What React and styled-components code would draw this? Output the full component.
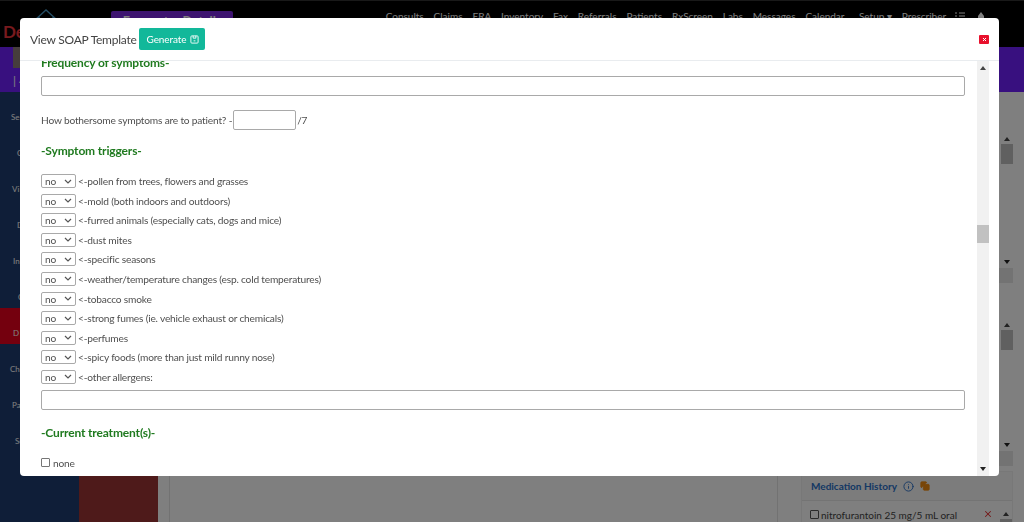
import React from 'react';
import styled, { createGlobalStyle } from 'styled-components';
import { X, Info, Copy } from 'lucide-react';

const GlobalStyle = createGlobalStyle`
  html, body { margin: 0; padding: 0; height: 100%; overflow: hidden; }
  body { font-family: Lato, "Open Sans", sans-serif; color: #4a4a4a; background: #fff; }
  * { box-sizing: border-box; }
`;

const Page = styled.div`
  width: 1024px;
  height: 522px;
  overflow: hidden;
  display: flex;
  flex-direction: column;
`;

const TopBar = styled.div`
  height: 47px;
  flex: none;
  background: #000;
  border-top: 1px solid #333;
  display: flex;
  align-items: flex-start;
  padding-right: 40px;
`;

const BrandBlock = styled.div`
  width: 111px;
  flex: none;
  display: flex;
  flex-direction: column;
  padding: 8px 0 0 3px;
`;

const LogoMark = styled.svg`
  display: block;
  margin-left: 31px;
`;

const Brand = styled.div`
  color: #f0343c;
  font-size: 17px;
  font-weight: 700;
  line-height: 18px;
`;

const EncounterButton = styled.div`
  width: 122px;
  height: 30px;
  margin-top: 10px;
  background: #7a28e0;
  border-radius: 2px;
  color: #fff;
  font-size: 12.5px;
  font-weight: 700;
  line-height: 22px;
  text-align: center;
`;

const TopNav = styled.nav`
  margin-left: auto;
  display: flex;
  align-items: center;
  gap: 9.9px;
  padding-top: 8px;
  color: #fff;
  font-size: 10px;
  line-height: 14px;
`;

const SetupLink = styled.span`
  margin-left: 4.6px;
`;

const NavIcons = styled.div`
  display: flex;
  align-items: center;
  gap: 13px;
  margin-left: -1px;
`;

const PurpleBand = styled.div`
  height: 45px;
  flex: none;
  background: #7020ff;
  padding-left: 13px;
`;

const Avatar = styled.div`
  width: 24px;
  height: 21px;
  background: #8c7a78;
`;

const UserLine = styled.div`
  margin-top: 6px;
  color: #fff;
  font-size: 12px;
  line-height: 13px;
`;

const Body = styled.div`
  flex: 1;
  display: flex;
  min-height: 0;
`;

const SideBar = styled.div`
  width: 79px;
  flex: none;
  background: #1e3c70;
  display: flex;
  flex-direction: column;
`;

const SideItem = styled.div`
  height: 36px;
  padding: 19px 0 0 ${({ $indent }) => $indent}px;
  line-height: 12px;
  font-size: 8px;
  color: #fff;
  background: ${({ $active }) => ($active ? '#e8001c' : 'transparent')};
`;

const RedPanel = styled.div`
  width: 79px;
  flex: none;
  background: #9c3434;
`;

const MainArea = styled.div`
  flex: 1;
  min-width: 0;
  background: #fff;
  display: flex;
  padding: 0 11px 0 11px;
`;

const Worksheet = styled.div`
  width: 609px;
  flex: none;
  border-left: 1px solid #e4e4e4;
  border-right: 1px solid #e4e4e4;
`;

const RightColumn = styled.div`
  margin-left: 23px;
  flex: 1;
  display: flex;
  flex-direction: column;
  padding-top: 8px;
`;

const SidePanel = styled.div`
  flex: none;
  height: ${({ $height }) => $height}px;
  display: flex;
  flex-direction: column;
`;

const PanelBody = styled.div`
  flex: 1;
  min-height: 0;
  display: flex;
  justify-content: flex-end;
  padding-top: ${({ $top }) => $top}px;
`;

const PanelFooter = styled.div`
  height: 15px;
  margin-bottom: 1px;
  flex: none;
  background: #e6e6e6;
`;

const MiniScroll = styled.div`
  width: 12px;
  display: flex;
  flex-direction: column;
  align-items: center;
  padding: 3px 0 4px;
  background: #fff;
`;

const MiniThumb = styled.div`
  width: 12px;
  height: 20px;
  margin-top: 3px;
  background: #c1c1c1;
`;

const MiniSpacer = styled.div`
  flex: 1;
`;

const MedicationPanel = styled.div`
  flex: 1;
  margin-top: 4px;
  border: 1px solid #f0f0f0;
  display: flex;
  flex-direction: column;
`;

const MedicationHeader = styled.div`
  height: 29px;
  flex: none;
  padding-left: 9px;
  display: flex;
  align-items: center;
  gap: 6px;
  color: #2a70c8;
  font-size: 10px;
  font-weight: 700;
  border-bottom: 1px solid #e8e8e8;
  background: #f8f8f8;
`;

const MedicationRow = styled.div`
  flex: 1;
  display: flex;
  align-items: flex-start;
  gap: 2px;
  padding: 8px 0 0 8px;
  font-size: 10px;
  color: #444;
`;

const MedicationX = styled.span`
  margin-left: auto;
  margin-right: 5px;
  color: #e83030;
  display: flex;
`;

const MedicationCheck = styled.span`
  width: 9px;
  height: 9px;
  margin-top: 1px;
  border: 1px solid #555;
  border-radius: 1px;
`;

const Backdrop = styled.div`
  position: fixed;
  inset: 0;
  background: rgba(0, 0, 0, 0.5);
`;

const Modal = styled.div`
  position: fixed;
  left: 20px;
  top: 18px;
  width: 979px;
  height: 458px;
  background: #fff;
  border-radius: 4px;
  display: flex;
  flex-direction: column;
  overflow: hidden;
`;

const ModalHeader = styled.div`
  height: 43px;
  flex: none;
  border-bottom: 1px solid #e9ecef;
  display: flex;
  align-items: center;
  padding: 0 10px;
`;

const ModalTitle = styled.h5`
  margin: 0 2px 0 0;
  font-size: 12px;
  letter-spacing: -0.25px;
  font-weight: 400;
  color: #444;
`;

const GenerateButton = styled.button`
  height: 22px;
  width: 66px;
  padding: 0 0 0 8px;
  border: none;
  border-radius: 2px;
  background: #12b89a;
  color: #fff;
  font-family: inherit;
  font-size: 10px;
  letter-spacing: -0.1px;
  display: flex;
  align-items: center;
  gap: 4px;
`;

const CloseButton = styled.button`
  margin-left: auto;
  width: 10px;
  height: 9px;
  padding: 0;
  border: none;
  border-radius: 1px;
  background: #e8112d;
  color: #fff;
  display: flex;
  align-items: center;
  justify-content: center;
`;

const ScrollRow = styled.div`
  flex: 1;
  display: flex;
  min-height: 0;
  padding-right: 10px;
`;

const Content = styled.div`
  flex: 1;
  overflow: hidden;
  padding: 0 12px 0 21px;
  font-size: 10.2px;
  letter-spacing: -0.2px;
  color: #505050;
`;

const Heading = styled.div`
  color: #1f7a1f;
  font-size: 12px;
  letter-spacing: -0.15px;
  font-weight: 700;
  line-height: 14px;
  margin-top: ${({ $top }) => $top}px;
`;

const WideInput = styled.div`
  height: 20px;
  border: 1px solid #a9a9a9;
  border-radius: 2px;
  margin-top: ${({ $top }) => $top}px;
`;

const ScoreRow = styled.div`
  display: flex;
  align-items: center;
  gap: 1px;
  height: 20px;
  margin-top: 14px;
`;

const ScoreInput = styled.div`
  width: 63px;
  height: 20px;
  border: 1px solid #a9a9a9;
  border-radius: 2px;
`;

const TriggerList = styled.div`
  margin-top: 16px;
  display: flex;
  flex-direction: column;
  gap: 5.6px;
`;

const TriggerRow = styled.div`
  display: flex;
  align-items: center;
  gap: 2px;
  height: 14px;
`;

const SelectBox = styled.div`
  width: 35px;
  height: 14px;
  border: 1px solid #a9a9a9;
  border-radius: 2px;
  padding: 0 3px;
  display: flex;
  align-items: center;
  justify-content: space-between;
`;

const CheckRow = styled.div`
  display: flex;
  align-items: center;
  gap: 3px;
  margin-top: 17px;
`;

const CheckBox = styled.span`
  width: 9px;
  height: 9px;
  border: 1px solid #767676;
  border-radius: 1px;
`;

const ScrollTrack = styled.div`
  width: 12px;
  flex: none;
  background: #f1f1f1;
  display: flex;
  flex-direction: column;
  align-items: center;
  justify-content: space-between;
  padding: 5px 0;
  position: relative;
`;

const ScrollThumb = styled.div`
  position: absolute;
  top: 164px;
  left: 0;
  width: 12px;
  height: 18px;
  background: #c1c1c1;
`;

const triggers = [
  'pollen from trees, flowers and grasses',
  'mold (both indoors and outdoors)',
  'furred animals (especially cats, dogs and mice)',
  'dust mites',
  'specific seasons',
  'weather/temperature changes (esp. cold temperatures)',
  'tobacco smoke',
  'strong fumes (ie. vehicle exhaust or chemicals)',
  'perfumes',
  'spicy foods (more than just mild runny nose)',
  'other allergens:',
];

const navItems = ['Consults', 'Claims', 'ERA', 'Inventory', 'Fax', 'Referrals', 'Patients', 'RxScreen', 'Labs', 'Messages', 'Calendar'];

const sideItems = [
  { label: 'Se', indent: 11 },
  { label: 'C', indent: 17 },
  { label: 'Vi', indent: 12 },
  { label: 'D', indent: 17 },
  { label: 'In', indent: 13 },
  { label: 'C', indent: 18 },
  { label: 'D', indent: 13, active: true },
  { label: 'Ch', indent: 10 },
  { label: 'Pa', indent: 12 },
  { label: 'Se', indent: 15 },
];

const ArrowUp = () => (
  <svg width="6" height="4" viewBox="0 0 6 4" fill="#444"><path d="M0 4l3-4 3 4z" /></svg>
);

const ArrowDown = () => (
  <svg width="6" height="4" viewBox="0 0 6 4" fill="#222"><path d="M0 0l3 4 3-4z" /></svg>
);

const Chevron = () => (
  <svg width="8" height="5" viewBox="0 0 8 5" fill="none" stroke="#555" strokeWidth="1.2"><path d="M1 1l3 3 3-3" /></svg>
);

const App = () => (
  <Page>
    <GlobalStyle />
    <TopBar>
      <BrandBlock>
        <LogoMark width="24" height="14" viewBox="0 0 24 14" fill="none" stroke="#4a9ac8" strokeWidth="1.4">
          <path d="M1 11L12 1l11 10M5 8v6M19 8v6" />
        </LogoMark>
        <Brand>De</Brand>
      </BrandBlock>
      <EncounterButton>Encounter Details</EncounterButton>
      <TopNav>
        {navItems.map((item) => <span key={item}>{item}</span>)}
        <SetupLink>Setup ▾</SetupLink>
        <span>Prescriber</span>
        <NavIcons>
          <svg width="10" height="8" viewBox="0 0 10 8" stroke="#fff" strokeWidth="1"><path d="M0 1h2M4 1h6M0 4h2M4 4h6" /></svg>
          <svg width="6" height="8" viewBox="0 0 6 8" fill="#fff"><path d="M3 0l3 4v4H0V4z" /></svg>
        </NavIcons>
      </TopNav>
    </TopBar>
    <PurpleBand>
      <Avatar />
      <UserLine>| 4</UserLine>
    </PurpleBand>
    <Body>
      <SideBar>
        {sideItems.map((item, i) => (
          <SideItem key={i} $indent={item.indent} $active={item.active}>{item.label}</SideItem>
        ))}
      </SideBar>
      <RedPanel />
      <MainArea>
        <Worksheet />
        <RightColumn>
          <SidePanel $height={184}>
            <PanelBody $top={34}>
              <MiniScroll>
                <ArrowUp />
                <MiniThumb />
                <MiniSpacer />
                <ArrowDown />
              </MiniScroll>
            </PanelBody>
            <PanelFooter />
          </SidePanel>
          <SidePanel $height={183}>
            <PanelBody $top={36}>
              <MiniScroll>
                <ArrowUp />
                <MiniThumb />
                <MiniSpacer />
                <ArrowDown />
              </MiniScroll>
            </PanelBody>
            <PanelFooter />
          </SidePanel>
          <MedicationPanel>
            <MedicationHeader>
              Medication History
              <Info size={11} color="#2a70c8" />
              <Copy size={10} color="#f08a10" fill="#f08a10" />
            </MedicationHeader>
            <MedicationRow>
              <MedicationCheck />
              nitrofurantoin 25 mg/5 mL oral
              <MedicationX><X size={10} strokeWidth={2.5} /></MedicationX>
              <MiniScroll>
                <ArrowUp />
                <MiniThumb />
              </MiniScroll>
            </MedicationRow>
          </MedicationPanel>
        </RightColumn>
      </MainArea>
    </Body>
    <Backdrop />
    <Modal>
      <ModalHeader>
        <ModalTitle>View SOAP Template</ModalTitle>
        <GenerateButton>
          Generate
          <svg width="9" height="9" viewBox="0 0 10 10" fill="none" stroke="#fff"><rect x="1" y="1" width="8" height="8" rx="1" /><path d="M3.5 1v2.5h3V1M4 6.5h2" /></svg>
        </GenerateButton>
        <CloseButton>
          <svg width="5" height="5" viewBox="0 0 5 5" stroke="#fff"><path d="M1 1l3 3M4 1l-3 3" /></svg>
        </CloseButton>
      </ModalHeader>
      <ScrollRow>
        <Content>
          <Heading $top={-5}>Frequency of symptoms-</Heading>
          <WideInput $top={6} />
          <ScoreRow>How bothersome symptoms are to patient? - <ScoreInput /> /7</ScoreRow>
          <Heading $top={14}>-Symptom triggers-</Heading>
          <TriggerList>
            {triggers.map((t) => (
              <TriggerRow key={t}>
                <SelectBox>no <Chevron /></SelectBox>
                {'<-' + t}
              </TriggerRow>
            ))}
          </TriggerList>
          <WideInput $top={6} />
          <Heading $top={16}>-Current treatment(s)-</Heading>
          <CheckRow><CheckBox />none</CheckRow>
        </Content>
        <ScrollTrack>
          <ArrowUp />
          <ScrollThumb />
          <ArrowDown />
        </ScrollTrack>
      </ScrollRow>
    </Modal>
  </Page>
);

export default App;
